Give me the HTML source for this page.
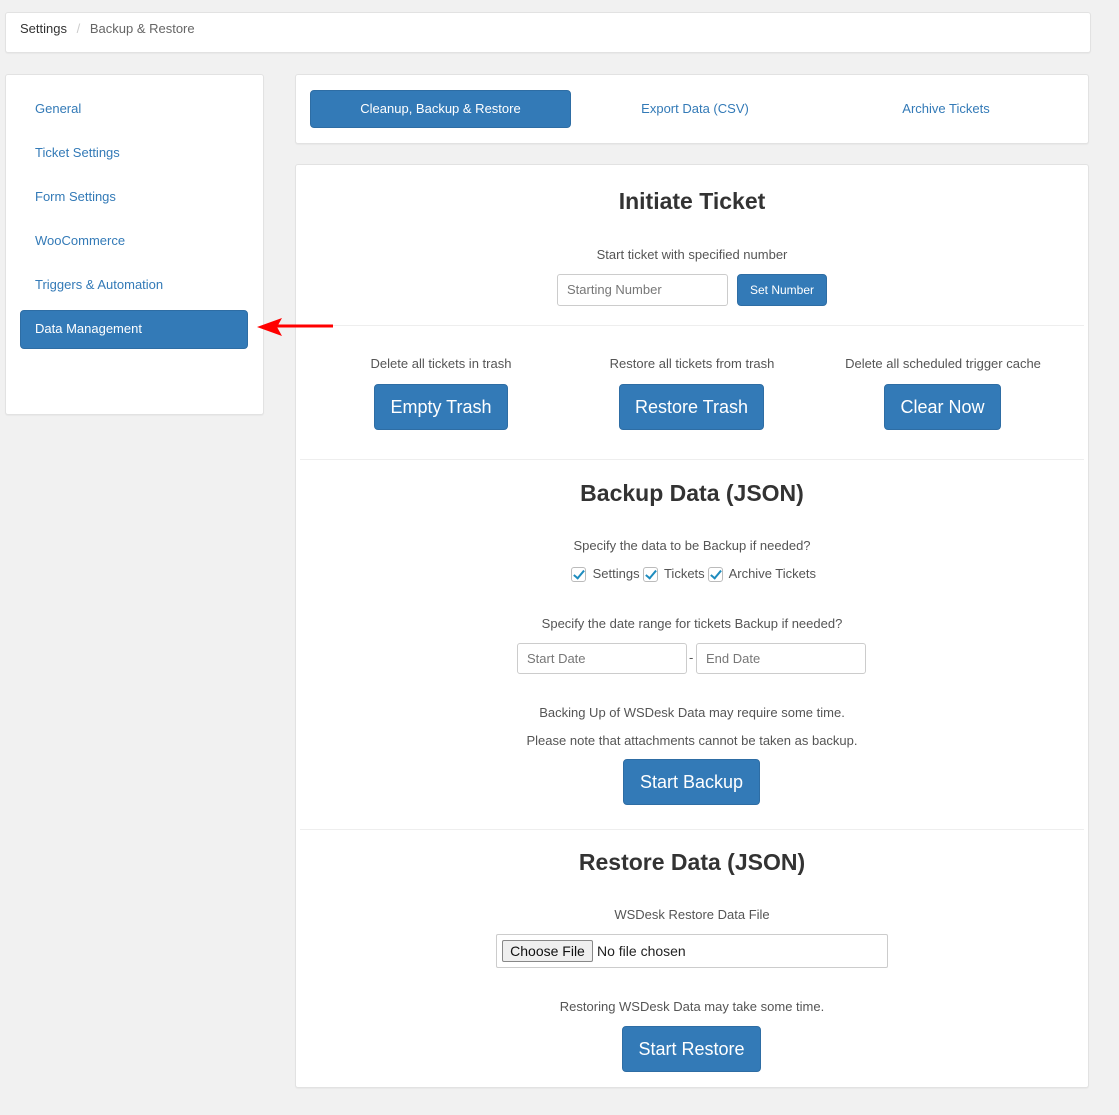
<!DOCTYPE html>
<html><head><meta charset="utf-8"><style>
*{box-sizing:border-box;margin:0;padding:0}
body{width:1119px;height:1115px;background:#f1f1f1;font-family:"Liberation Sans",Arial,sans-serif;position:relative;overflow:hidden;color:#555}
.box{position:absolute;background:#fff;border:1px solid #e2e2e2;border-radius:3px;box-shadow:0 1px 1px rgba(0,0,0,.04)}
.a{position:absolute;white-space:nowrap}
.c{position:absolute;text-align:center;white-space:nowrap;transform:translateX(-50%)}
.nav{position:absolute;left:35px;font-size:13px;color:#337ab7}
.btn{position:absolute;background:#337ab7;color:#fff;border-radius:4px;text-align:center;border:1px solid #2e6da4}
.big{font-size:18px;line-height:44px;height:46px}
.h{font-size:23px;font-weight:bold;color:#333}
.t{font-size:13px;color:#555}
.sep{position:absolute;left:300px;width:784px;height:1px;background:#eee}
.inp{position:absolute;border:1px solid #ccc;border-radius:3px;background:#fff;font-size:13px;color:#777;padding-left:9px}
.cb{display:inline-block;width:15px;height:15px;border:1px solid #bbb;border-radius:3px;vertical-align:-4px;position:relative;margin:0 3px}
.cb:after{content:"";position:absolute;left:4px;top:0px;width:4px;height:9px;border:solid #1e8cbe;border-width:0 2px 2px 0;transform:rotate(40deg)}
</style></head><body>
<div class="box" style="left:5px;top:12px;width:1086px;height:41px"></div>
<div class="a" style="left:20px;top:21px;font-size:13px;color:#333">Settings <span style="color:#ccc;margin:0 6px">/</span> <span style="color:#666">Backup &amp; Restore</span></div>

<div class="box" style="left:5px;top:74px;width:259px;height:341px"></div>
<div class="nav" style="top:101px">General</div>
<div class="nav" style="top:145px">Ticket Settings</div>
<div class="nav" style="top:189px">Form Settings</div>
<div class="nav" style="top:233px">WooCommerce</div>
<div class="nav" style="top:277px">Triggers &amp; Automation</div>
<div class="btn" style="left:20px;top:310px;width:228px;height:39px"></div>
<div class="a" style="left:35px;top:321px;font-size:13px;color:#fff">Data Management</div>

<div class="box" style="left:295px;top:74px;width:794px;height:70px"></div>
<div class="btn" style="left:310px;top:90px;width:261px;height:38px;font-size:13px;line-height:36px">Cleanup, Backup &amp; Restore</div>
<div class="c" style="left:695px;top:101px;font-size:13px;color:#337ab7">Export Data (CSV)</div>
<div class="c" style="left:946px;top:101px;font-size:13px;color:#337ab7">Archive Tickets</div>

<div class="box" style="left:295px;top:164px;width:794px;height:924px"></div>
<svg class="a" style="left:255px;top:316px;z-index:5" width="80" height="24"><line x1="20" y1="10" x2="78" y2="10" stroke="#f00" stroke-width="3"/><polygon points="2,11 27,2 22,11 27,20" fill="#f00"/></svg>
<div class="c h" style="left:692px;top:188px">Initiate Ticket</div>
<div class="c t" style="left:692px;top:247px">Start ticket with specified number</div>
<div class="inp" style="left:557px;top:274px;width:171px;height:32px;line-height:30px;font-size:13px">Starting Number</div>
<div class="btn" style="left:737px;top:274px;width:90px;height:32px;font-size:12px;line-height:30px">Set Number</div>
<div class="sep" style="top:325px"></div>

<div class="c t" style="left:441px;top:356px">Delete all tickets in trash</div>
<div class="c t" style="left:692px;top:356px">Restore all tickets from trash</div>
<div class="c t" style="left:943px;top:356px">Delete all scheduled trigger cache</div>
<div class="btn big" style="left:374px;top:384px;width:134px">Empty Trash</div>
<div class="btn big" style="left:619px;top:384px;width:145px">Restore Trash</div>
<div class="btn big" style="left:884px;top:384px;width:117px">Clear Now</div>
<div class="sep" style="top:459px"></div>

<div class="c h" style="left:692px;top:480px">Backup Data (JSON)</div>
<div class="c t" style="left:692px;top:538px">Specify the data to be Backup if needed?</div>
<div class="c t" style="left:692px;top:566px"><span class="cb"></span> Settings<span class="cb"></span> Tickets<span class="cb"></span> Archive Tickets</div>
<div class="c t" style="left:692px;top:616px">Specify the date range for tickets Backup if needed?</div>
<div class="inp" style="left:517px;top:643px;width:170px;height:31px;line-height:29px">Start Date</div>
<div class="a t" style="left:689px;top:650px">-</div>
<div class="inp" style="left:696px;top:643px;width:170px;height:31px;line-height:29px">End Date</div>
<div class="c t" style="left:692px;top:705px">Backing Up of WSDesk Data may require some time.</div>
<div class="c t" style="left:692px;top:733px">Please note that attachments cannot be taken as backup.</div>
<div class="btn big" style="left:623px;top:759px;width:137px">Start Backup</div>
<div class="sep" style="top:829px"></div>

<div class="c h" style="left:692px;top:849px">Restore Data (JSON)</div>
<div class="c t" style="left:692px;top:907px">WSDesk Restore Data File</div>
<div class="a" style="left:496px;top:934px;width:392px;height:34px;border:1px solid #ccc;border-radius:2px;background:#fff"></div>
<div class="a" style="left:502px;top:940px;width:91px;height:22px;border:1px solid #888;border-radius:2px;background:#efefef;font-size:14px;color:#111;text-align:center;line-height:20px">Choose File</div>
<div class="a" style="left:597px;top:943px;font-size:14px;color:#222">No file chosen</div>
<div class="c t" style="left:692px;top:999px">Restoring WSDesk Data may take some time.</div>
<div class="btn big" style="left:622px;top:1026px;width:139px">Start Restore</div>
</body></html>
